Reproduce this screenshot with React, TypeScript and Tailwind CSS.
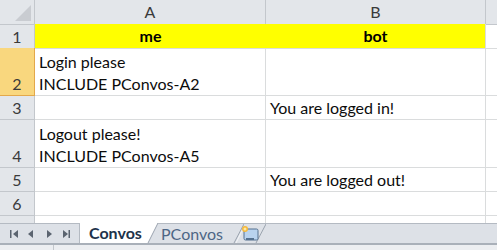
import React from "react";

const font = { fontFamily: "Lato, 'Liberation Sans', sans-serif" };

const rows = [
  { n: "1", h: "h-[24px]", a: "me", b: "bot", head: true },
  { n: "2", h: "h-[48px]", a: ["Login please", "INCLUDE PConvos-A2"], b: "", sel: true },
  { n: "3", h: "h-[24px]", a: "", b: "You are logged in!" },
  { n: "4", h: "h-[48px]", a: ["Logout please!", "INCLUDE PConvos-A5"], b: "" },
  { n: "5", h: "h-[24px]", a: "", b: "You are logged out!" },
  { n: "6", h: "h-[24px]", a: "", b: "" },
];

function Cell({ value, head }: { value: string | string[]; head?: boolean }) {
  if (head) {
    return (
      <div className="flex h-full items-center justify-center bg-[#ffff00] text-[16px] font-bold text-black">
        {value}
      </div>
    );
  }
  const lines = Array.isArray(value) ? value : value ? [value] : [];
  return (
    <div className="flex h-full flex-col justify-end px-[4px] text-[16px] leading-[22px] text-[#0c0c0c]">
      {lines.map((l) => (
        <span key={l}>{l}</span>
      ))}
    </div>
  );
}

function NavIcons() {
  return (
    <svg width="79" height="20" viewBox="0 0 79 20" className="text-[#5b6470]">
      <g fill="currentColor">
        <rect x="10" y="6" width="1.5" height="8" />
        <path d="M18 6 L13 10 L18 14 Z" />
        <path d="M33 6 L28 10 L33 14 Z" />
        <path d="M47 6 L52 10 L47 14 Z" />
        <path d="M63 6 L68 10 L63 14 Z" />
        <rect x="68.5" y="6" width="1.5" height="8" />
      </g>
    </svg>
  );
}

function SheetIcon() {
  return (
    <svg width="20" height="18" viewBox="0 0 20 18">
      <rect x="4" y="4" width="14" height="11" rx="1.5" fill="#b9d3ee" stroke="#55718f" strokeWidth="1" />
      <rect x="6" y="13" width="8" height="2" fill="#55718f" />
      <circle cx="5" cy="4" r="3" fill="#f5b83a" />
      <circle cx="5" cy="4" r="1.5" fill="#fde9a5" />
    </svg>
  );
}

export default function App() {
  return (
    <div className="h-[250px] w-[497px] overflow-hidden bg-white" style={font}>
      {/* column headers */}
      <div className="grid h-[24px] grid-cols-[35px_231px_220px_11px] text-[16px] text-[#3a3a3a]">
        <div className="relative border-r border-b border-[#c3c7cc] bg-[#e3e6ea]">
          <svg className="absolute right-[3px] bottom-[3px]" width="16" height="16" viewBox="0 0 16 16">
            <path d="M16 0 L16 16 L0 16 Z" fill="#c9ccd1" />
          </svg>
        </div>
        <div className="flex items-center justify-center border-r border-b border-[#c3c7cc] bg-[#e3e6ea]">A</div>
        <div className="flex items-center justify-center border-r border-b border-[#c3c7cc] bg-[#e3e6ea]">B</div>
        <div className="border-b border-[#c3c7cc] bg-[#e3e6ea]" />
      </div>

      {rows.map((r) => (
        <div key={r.n} className={`grid grid-cols-[35px_231px_220px_11px] ${r.h}`}>
          <div
            className={`flex items-end justify-center border-r border-b text-[16px] leading-[22px] ${
              r.sel
                ? "border-[#e3a84a] bg-[#f9d77e] text-[#3a3a3a]"
                : "border-[#c3c7cc] bg-[#e3e6ea] text-[#3a3a3a]"
            }`}
          >
            {r.n}
          </div>
          <div className={`border-b border-[#dadcdd] ${r.head ? "" : "border-r"}`}>
            <Cell value={r.a} head={r.head} />
          </div>
          <div className="border-r border-b border-[#dadcdd]">
            <Cell value={r.b} head={r.head} />
          </div>
          <div className="border-b border-[#dadcdd]" />
        </div>
      ))}

      {/* partial row 7 */}
      <div className="grid h-[7px] grid-cols-[35px_231px_220px_11px]">
        <div className="border-r border-[#c3c7cc] bg-[#e3e6ea]" />
        <div className="border-r border-[#dadcdd]" />
        <div className="border-r border-[#dadcdd]" />
        <div />
      </div>

      {/* sheet tabs */}
      <div className="flex h-[20px] border-t border-[#b4bac2] bg-[#dde1e7]">
        <div className="flex w-[80px] items-center border-r border-[#b4bac2]">
          <NavIcons />
        </div>
        <div className="relative -mt-px flex h-[20px] w-[78px] items-center pl-[9px] text-[16px] font-bold text-[#20324a]">
          <svg className="absolute inset-0" width="78" height="20" viewBox="0 0 78 20">
            <path d="M0 0 L78 0 L68 20 L0 20 Z" fill="#ffffff" />
            <path d="M68 20 L78 0" stroke="#9aa3ae" strokeWidth="1" fill="none" />
          </svg>
          <span className="relative">Convos</span>
        </div>
        <div className="relative -ml-[6px] flex h-[19px] w-[92px] items-center pl-[9px] text-[16px] text-[#4d6685]">
          <svg className="absolute inset-0" width="92" height="19" viewBox="0 0 92 19">
            <path d="M82 19 L92 0" stroke="#9aa3ae" strokeWidth="1" fill="none" />
            <path d="M84 19 L93 1" stroke="#f3f5f8" strokeWidth="1" fill="none" />
          </svg>
          <span className="relative">PConvos</span>
        </div>
        <div className="relative -ml-[8px] flex h-[19px] w-[30px] items-center pl-[4px]">
          <svg className="absolute inset-0" width="30" height="19" viewBox="0 0 30 19">
            <path d="M20 19 L30 0" stroke="#9aa3ae" strokeWidth="1" fill="none" />
          </svg>
          <span className="relative">
            <SheetIcon />
          </span>
        </div>
      </div>

      {/* status strip */}
      <div className="flex h-[7px] border-t-2 border-[#a9b0b9] bg-[#eceef1]">
        <div className="w-[54px] border-r border-[#c3c7cc]" />
      </div>
    </div>
  );
}
